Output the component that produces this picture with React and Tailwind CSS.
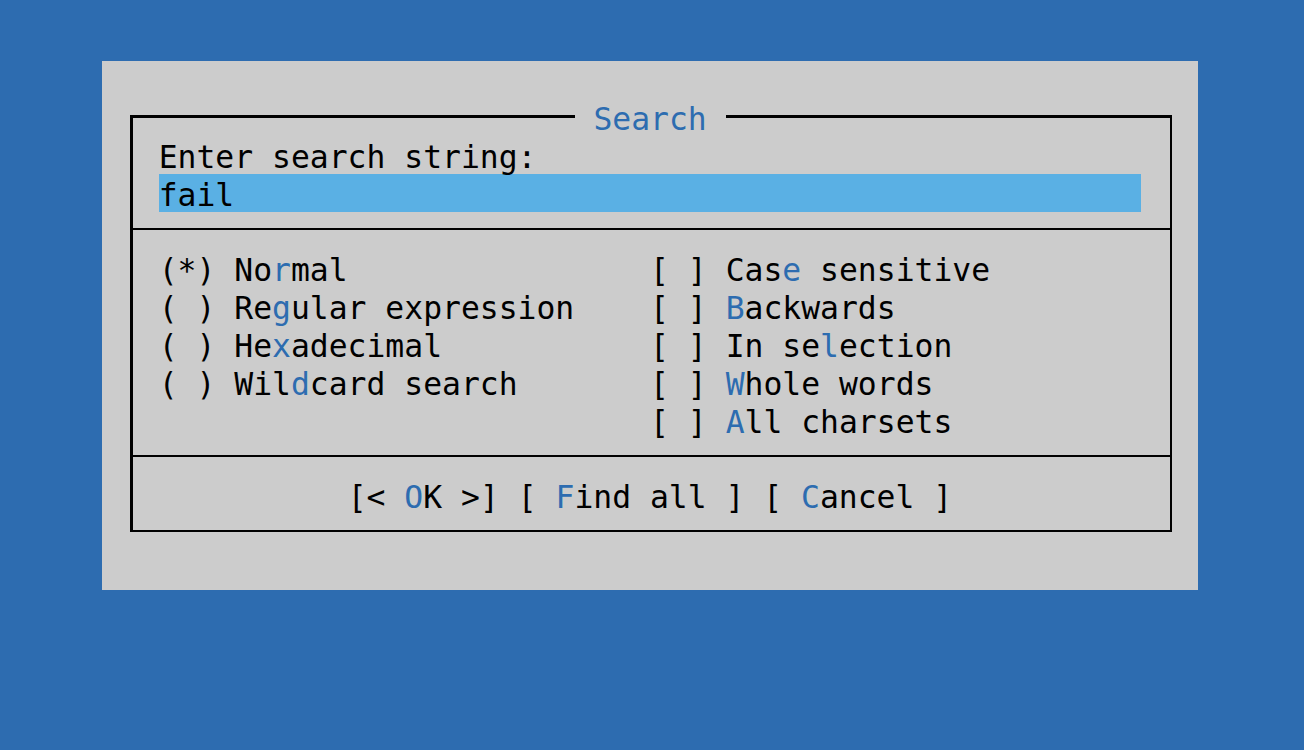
import React from "react";

const Hot = ({ children }) => <span className="text-[#2d6cb0]">{children}</span>;

const Row = ({ children }) => (
  <div className="h-[37.8px] whitespace-pre">{children}</div>
);

export default function App() {
  return (
    <div className="w-[1304px] h-[750px] overflow-hidden bg-[#2d6cb0] pt-[61px] pl-[102px] font-['DejaVu_Sans_Mono','Liberation_Mono',monospace] text-[31.393px] leading-[42.8px] text-black">
      <div className="w-[1096px] h-[529px] bg-[#cccccc] pt-[54px] pl-[28px]">
        <div className="relative w-[1042px] h-[417px] border-t-[3px] border-l-[3px] border-r-2 border-b-2 border-black">
          <div className="absolute left-[441.5px] top-[-20.5px] h-[37.8px] bg-[#cccccc] whitespace-pre text-[#2d6cb0]">
            {" Search "}
          </div>
          <div className="pt-[18.4px] pl-[25.7px]">
            <Row>Enter search string:</Row>
            <div className="w-[982.8px] h-[37.7px] bg-[#5ab0e4] whitespace-pre">fail</div>
          </div>
          <div className="mt-[16.4px] h-[2px] bg-black" />
          <div className="mt-[19.2px] pl-[25.7px] flex">
            <div className="w-[491.4px] flex flex-col">
              <Row>(*) No<Hot>r</Hot>mal</Row>
              <Row>( ) Re<Hot>g</Hot>ular expression</Row>
              <Row>( ) He<Hot>x</Hot>adecimal</Row>
              <Row>( ) Wil<Hot>d</Hot>card search</Row>
            </div>
            <div className="flex flex-col">
              <Row>[ ] Cas<Hot>e</Hot> sensitive</Row>
              <Row>[ ] <Hot>B</Hot>ackwards</Row>
              <Row>[ ] In se<Hot>l</Hot>ection</Row>
              <Row>[ ] <Hot>W</Hot>hole words</Row>
              <Row>[ ] <Hot>A</Hot>ll charsets</Row>
            </div>
          </div>
          <div className="mt-[16.8px] h-[2px] bg-black" />
          <div className="mt-[18.4px] pl-[214.7px]">
            <Row>
              {"[< "}<Hot>O</Hot>{"K >] [ "}<Hot>F</Hot>{"ind all ] [ "}<Hot>C</Hot>{"ancel ]"}
            </Row>
          </div>
        </div>
      </div>
    </div>
  );
}
